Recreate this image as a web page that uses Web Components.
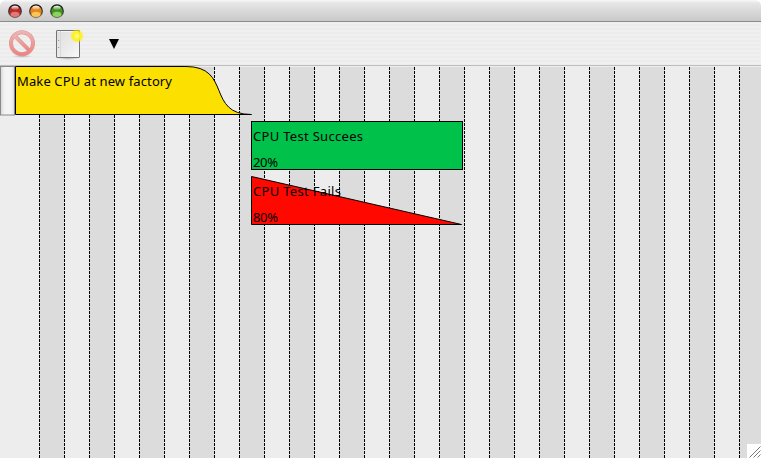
<!DOCTYPE html>
<html lang="en">
<head>
<meta charset="utf-8">
<title>Planner</title>
<style>
html,body{margin:0;height:100%;background:#fff;overflow:hidden}
</style>
</head>
<body>
<planner-window></planner-window>
<script>
function define(name, html) {
  const t = document.createElement('template');
  t.innerHTML = html;
  customElements.define(name, class extends HTMLElement {
    constructor() {
      super();
      this.attachShadow({mode: 'open'}).appendChild(t.content.cloneNode(true));
    }
  });
}

define('window-light', `
<style>
:host{display:block;width:14px;height:15px}
svg{display:block}
.base{fill:var(--base)} .glow{fill:var(--glow)}
</style>
<svg width="14" height="15" viewBox="0 0 14 15">
  <defs>
    <linearGradient id="h" x2="0" y2="1"><stop offset="0" stop-color="#fff" stop-opacity=".95"/><stop offset="1" stop-color="#fff" stop-opacity=".15"/></linearGradient>
    <linearGradient id="s" x2="0" y2="1"><stop offset="0" stop-color="#111"/><stop offset=".6" stop-color="#333" stop-opacity=".85"/><stop offset="1" stop-color="#555" stop-opacity=".6"/></linearGradient>
  </defs>
  <circle cx="7" cy="7.2" r="6.3" class="base" stroke="url(#s)" stroke-width="1.3"/>
  <ellipse cx="7" cy="10.3" rx="4.4" ry="2.6" class="glow" opacity=".8"/>
  <ellipse cx="7" cy="3.7" rx="3.6" ry="2" fill="url(#h)"/>
</svg>`);

define('title-bar', `
<style>
:host{display:flex;box-sizing:border-box;height:22px;padding:4px 0 0 8px;gap:7px;border-radius:6px 6px 0 0;
background:linear-gradient(#f8f8f8,#e6e6e6 3px,#c9c9c9 21px);border-bottom:1px solid #8b8b8b}
</style>
<window-light style="--base:#b92a2a;--glow:#f08c84"></window-light>
<window-light style="--base:#e58420;--glow:#ffd860"></window-light>
<window-light style="--base:#3f9420;--glow:#a4e070"></window-light>`);

define('tool-bar', `
<style>
:host{display:flex;box-sizing:border-box;height:44px;border-bottom:1px solid #bdbdbd;
background:repeating-linear-gradient(#f0f0f0 0 2px,#ececec 2px 4px)}
svg{display:block;flex:none}
</style>
<svg width="130" height="43" viewBox="0 22 130 43">
  <defs>
    <linearGradient id="r" x2="0" y2="1"><stop offset="0" stop-color="#eeb4b2"/><stop offset="1" stop-color="#ec8583"/></linearGradient>
    <linearGradient id="p" x2="1" y2="1"><stop offset="0" stop-color="#dedede"/><stop offset=".6" stop-color="#ececec"/><stop offset="1" stop-color="#fafafa"/></linearGradient>
    <radialGradient id="y"><stop offset="0" stop-color="#fffcb0"/><stop offset=".3" stop-color="#fff54a"/><stop offset=".65" stop-color="#fff000" stop-opacity=".85"/><stop offset="1" stop-color="#fff000" stop-opacity="0"/></radialGradient>
    <radialGradient id="d"><stop offset="0" stop-color="#888" stop-opacity=".5"/><stop offset="1" stop-color="#888" stop-opacity="0"/></radialGradient>
  </defs>
  <ellipse cx="22" cy="56.3" rx="11" ry="1.6" fill="url(#d)"/>
  <g fill="none" stroke="#dc9795" stroke-width="4"><circle cx="22" cy="43.2" r="11"/><path d="M14.5 35.7l15 15"/></g>
  <g fill="none" stroke="url(#r)" stroke-width="2.8"><circle cx="22" cy="43.2" r="11"/><path d="M14.5 35.7l15 15"/></g>
  <ellipse cx="68" cy="58.5" rx="12" ry="1.5" fill="url(#d)"/>
  <rect x="56.500" y="30.500" width="23" height="27" rx=".5" fill="url(#p)" stroke="#747474"/>
  <path d="M57.500 31.500h21" stroke="#fff" opacity=".6"/>
  <path d="M60.500 31v26" stroke="#d8d8d8"/>
  <path d="M58 40.500h1.200M58 47.500h1.200" stroke="#999"/>
  <circle cx="77" cy="36" r="7" fill="url(#y)"/>
  <path d="M109 39h10l-5 10z" fill="#000"/>
</svg>`);

define('time-chart', `
<style>
:host{display:block;position:relative;flex:1;overflow:hidden;background:#ededed}
svg{display:block}
text{font:13px "Noto Sans","Open Sans",sans-serif;fill:#000}
</style>
<svg width="761" height="392" viewBox="0 66 761 392">
  <defs>
    <pattern id="cols" x="39" y="67" width="50" height="4" patternUnits="userSpaceOnUse">
      <rect width="50" height="4" fill="#ededed"/><rect width="25" height="4" fill="#dcdcdc"/>
      <rect width="1" height="3"/><rect x="25" width="1" height="3"/>
    </pattern>
    <linearGradient id="k"><stop offset="0" stop-color="#d8d8d8"/><stop offset=".3" stop-color="#f4f4f4"/><stop offset=".75" stop-color="#f4f4f4"/><stop offset="1" stop-color="#dcdcdc"/></linearGradient>
  </defs>
  <rect y="66" width="761" height="392" fill="#ededed"/>
  <rect x="39" y="67" width="722" height="391" fill="url(#cols)"/>
  <rect x=".5" y="66.500" width="14" height="48.500" fill="url(#k)" stroke="#8a8a8a"/>
  <path d="M15.500 66.500H186C232 66.500 206 114.500 251.500 114.500H15.500z" fill="#fce000" stroke="#000"/>
  <rect x="251.500" y="121.500" width="211" height="48" fill="#00c24a" stroke="#000"/>
  <path d="M251.500 176.500L461.500 224.500H251.500z" fill="#ff0800" stroke="#000" stroke-linejoin="bevel"/>
  <text x="17" y="86" textLength="155">Make CPU at new factory</text>
  <text x="253" y="141" textLength="110">CPU Test Succees</text>
  <text x="253" y="167" textLength="25">20%</text>
  <text x="253" y="196" textLength="88">CPU Test Fails</text>
  <text x="253" y="222" textLength="25">80%</text>
  <rect x="747" y="444" width="14" height="14" fill="#fff"/>
  <path d="M749.500 457.500l11-11M753.500 457.500l7-7M757.500 457.500l3-3" stroke="#777" fill="none"/>
</svg>`);

define('planner-window', `
<style>:host{display:flex;flex-direction:column;width:761px;height:458px}</style>
<title-bar></title-bar><tool-bar></tool-bar><time-chart></time-chart>`);
</script>
</body>
</html>
